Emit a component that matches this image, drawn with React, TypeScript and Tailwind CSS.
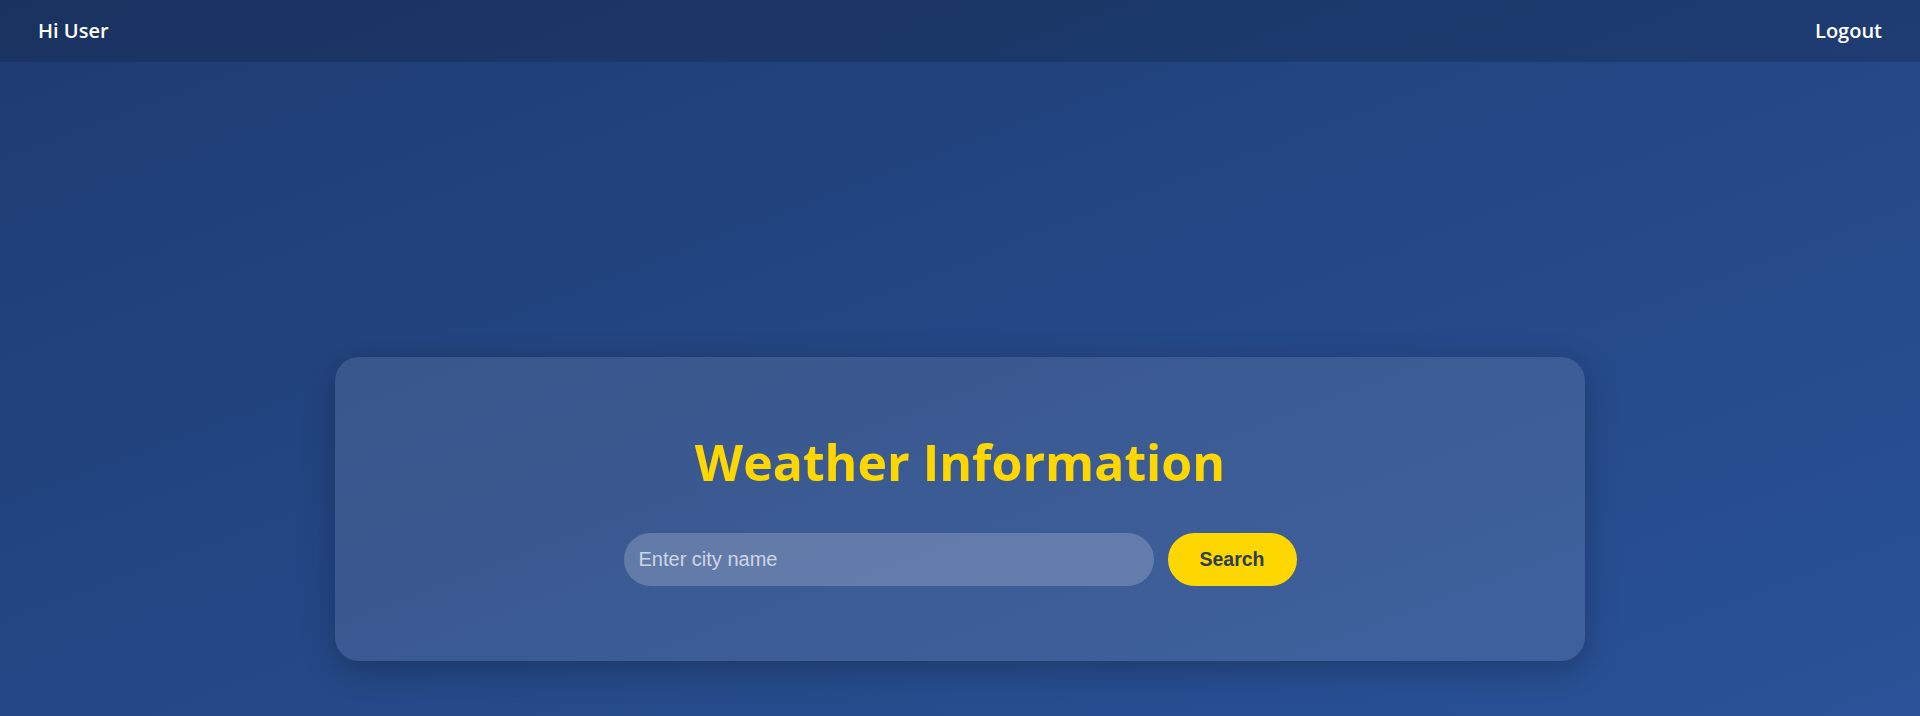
import React from 'react';

export default function App() {
  return (
    <div className="min-h-screen bg-gradient-to-br from-[#1e3c72] to-[#2a5298] font-['Open_Sans',sans-serif]">
      {/* Top bar */}
      <header className="h-[62px] px-[38px] flex items-center justify-between bg-black/15">
        <span className="text-white text-[20px] font-semibold">Hi User</span>
        <button className="text-white text-[20px] font-semibold">Logout</button>
      </header>

      {/* Weather card */}
      <main className="flex justify-center pt-[295px] pb-[55px]">
        <div className="w-[1250px] rounded-[24px] bg-white/10 shadow-[0_8px_32px_rgba(0,0,0,0.25)] pt-[75px] pb-[75px] flex flex-col items-center">
          <h1 className="text-[50px] leading-[1.2] font-bold text-[#ffd700] mb-[41px]">Weather Information</h1>
          <div className="flex items-center gap-[14px]">
            <input
              type="text"
              placeholder="Enter city name"
              className="w-[530px] h-[53px] rounded-full bg-white/20 pl-[15px] pr-4 text-[20px] text-white placeholder:text-white/70 outline-none font-['Liberation_Sans',Arial,sans-serif]"
            />
            <button className="w-[129px] h-[53px] rounded-full bg-[#ffd700] text-[#2c3e50] text-[19.5px] font-bold font-['Liberation_Sans',Arial,sans-serif]">
              Search
            </button>
          </div>
        </div>
      </main>
    </div>
  );
}
